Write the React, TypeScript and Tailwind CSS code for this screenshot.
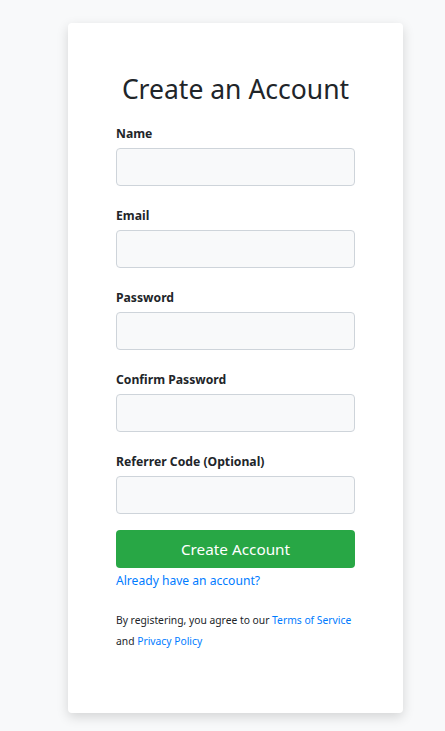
import React from 'react';

const fields = ['Name', 'Email', 'Password', 'Confirm Password', 'Referrer Code (Optional)'];

export default function App() {
  return (
    <div className="min-h-screen bg-[#f8f9fa] flex pl-[68px] pt-[23px] font-['Noto_Sans',sans-serif] text-[#212529]">
      <div className="w-[335px] h-[690px] bg-white rounded shadow-[0_4px_12px_rgba(0,0,0,0.15)] px-12 pt-[49px]">
        <h1 className="text-[26.5px] leading-[34px] text-center mb-[18px]">Create an Account</h1>
        <form className="flex flex-col">
          {fields.map((f, i) => (
            <div key={f} className={i < fields.length - 1 ? 'mb-[20px]' : 'mb-4'}>
              <label className="block text-[12.2px] leading-5 font-bold mb-[4px]">{f}</label>
              <input
                type={f.includes('Password') ? 'password' : 'text'}
                className="block w-full h-[38px] rounded bg-[#f8f9fa] border border-[#ced4da] outline-none px-3"
              />
            </div>
          ))}
          <button type="button" className="h-[38px] w-full rounded bg-[#28a745] text-white text-[15.3px]">
            Create Account
          </button>
          <a href="#" className="mt-[3px] text-[12.1px] leading-5 text-[#007bff]">Already have an account?</a>
          <p className="mt-[19px] text-[10.3px] leading-[21px]">
            By registering, you agree to our <a href="#" className="text-[#007bff]">Terms of Service</a>{' '}
            and <a href="#" className="text-[#007bff]">Privacy Policy</a>
          </p>
        </form>
      </div>
    </div>
  );
}
